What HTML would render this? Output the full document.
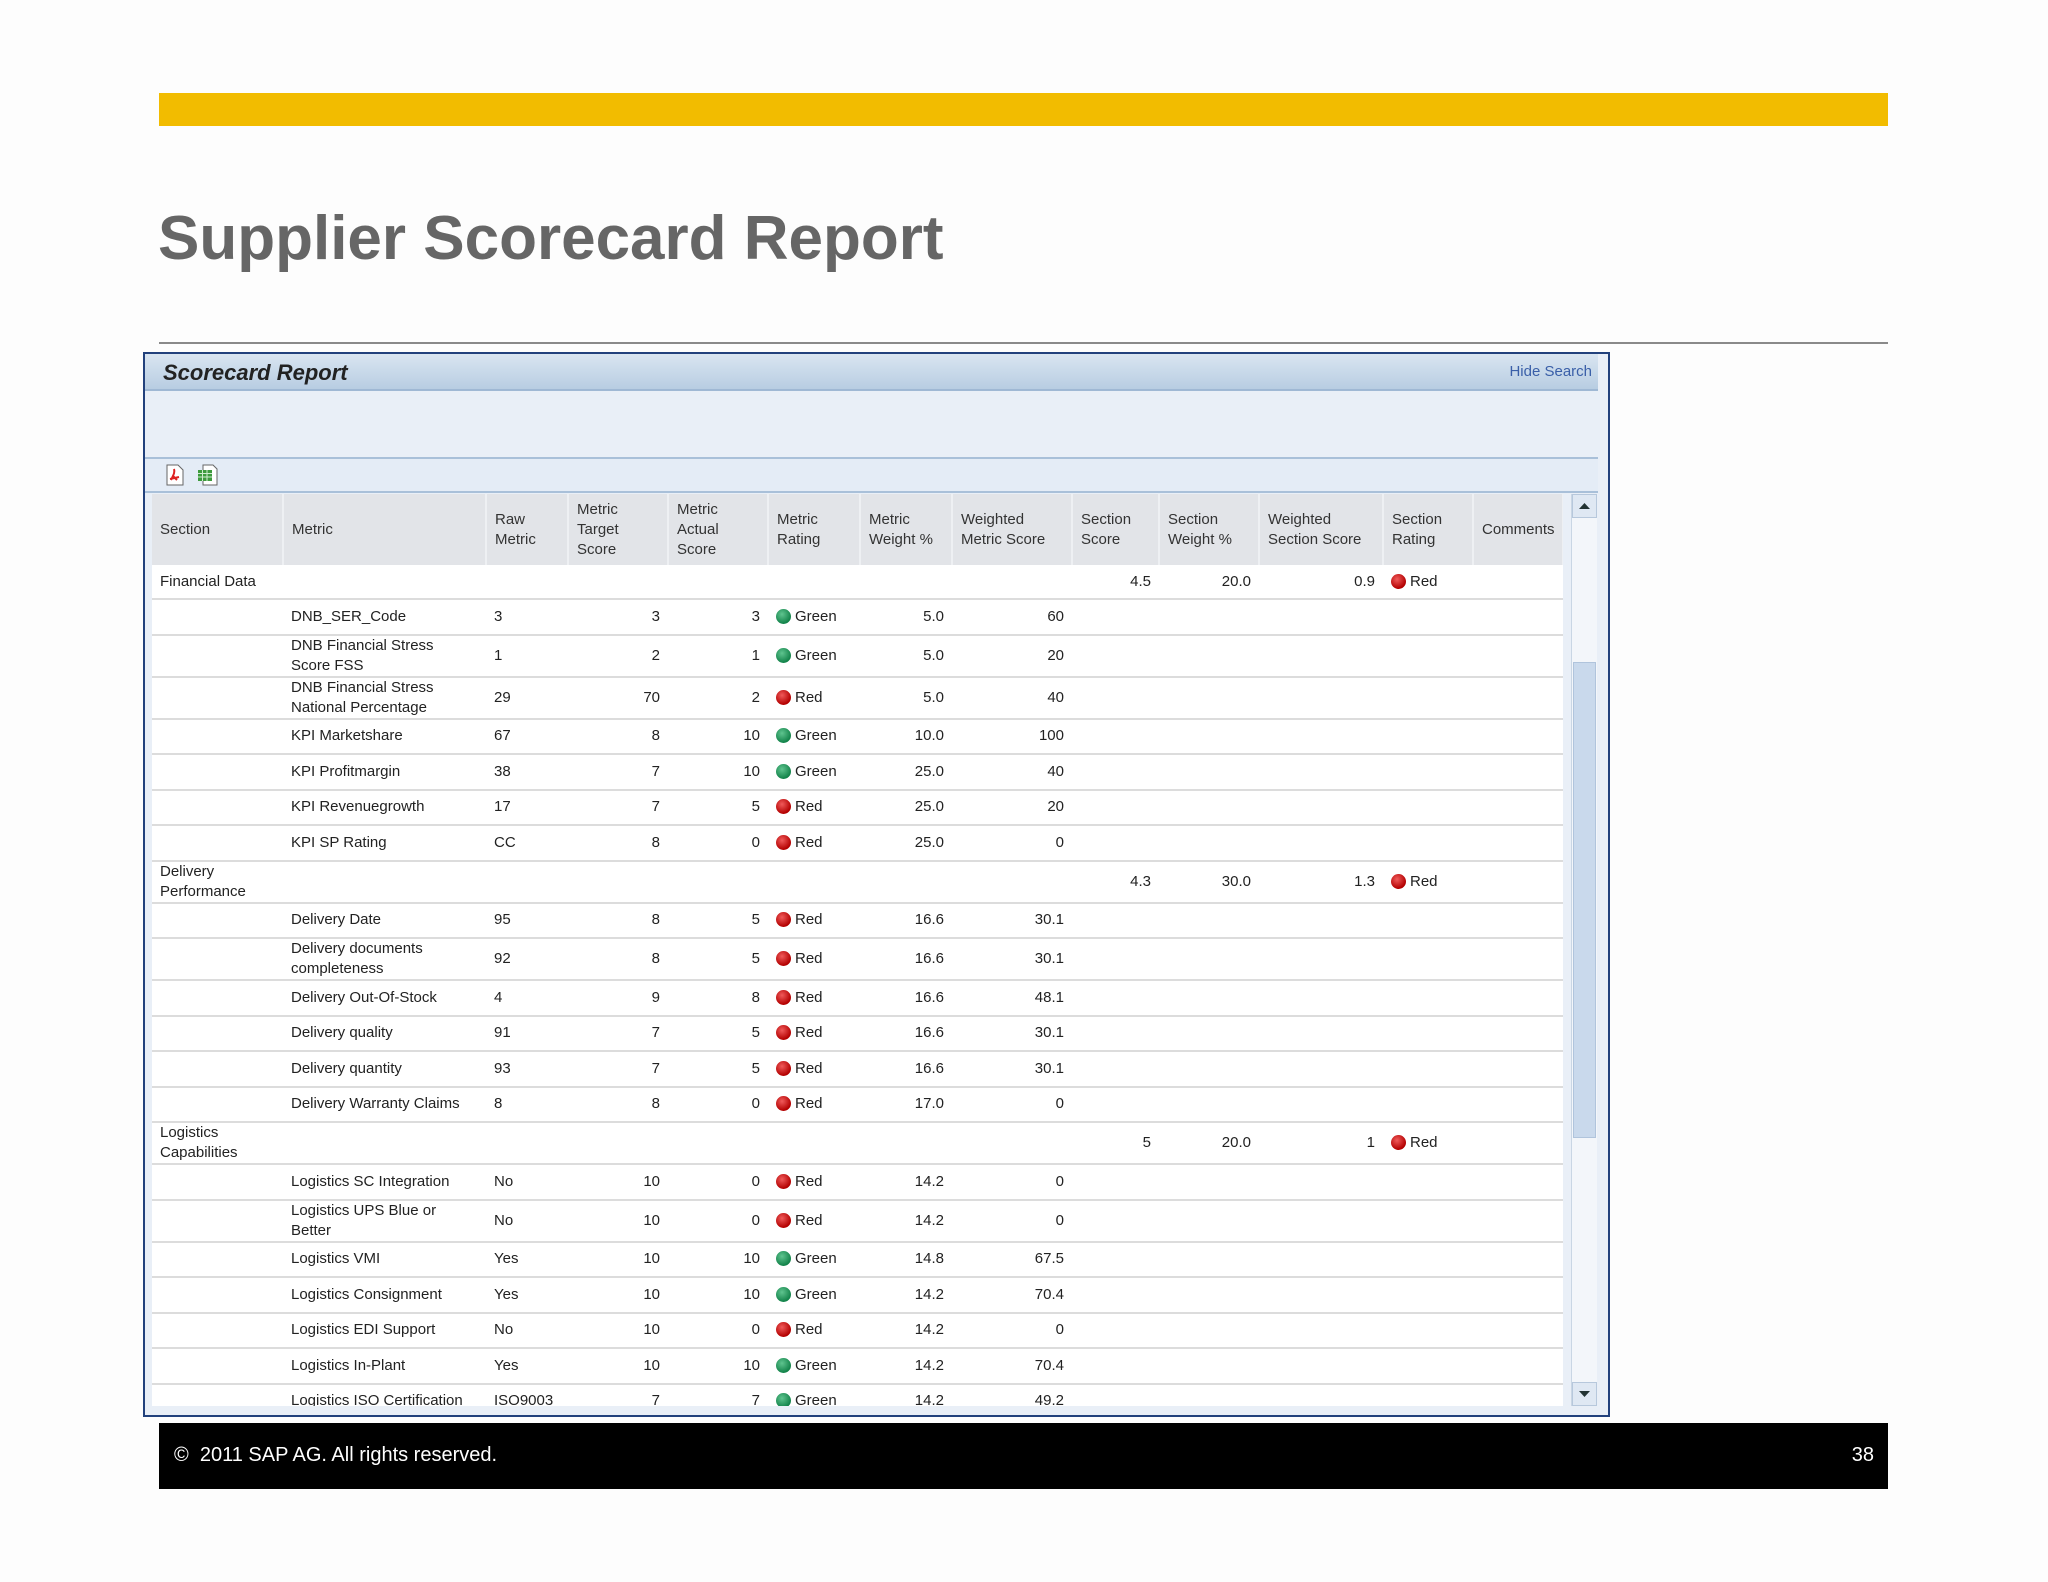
<!DOCTYPE html>
<html><head><meta charset="utf-8">
<style>
*{margin:0;padding:0;box-sizing:border-box}
body{width:2048px;height:1582px;background:#fdfdfd;position:relative;font-family:"Liberation Sans",Arial,sans-serif;overflow:hidden}
.yb{position:absolute;left:159px;top:93px;width:1729px;height:33px;background:#f2bc00}
.title{position:absolute;left:158px;top:203px;font-size:62px;font-weight:bold;color:#666;white-space:nowrap}
.rule{position:absolute;left:159px;top:342px;width:1729px;height:2px;background:#8a8a8a}
.box{position:absolute;left:143px;top:352px;width:1467px;height:1065px;border:2px solid #22417c;background:#e9eff7;overflow:hidden}
.hb{position:absolute;left:0;top:0;width:1453px;height:37px;background:linear-gradient(#d9e5f1,#b8cde2);border-bottom:2px solid #9fb8d4}
.hb .t{position:absolute;left:18px;top:6px;font-size:22px;font-weight:bold;font-style:italic;color:#222}
.hb .h{position:absolute;right:6px;top:9px;font-size:15px;color:#3a5fa8}
.tb{position:absolute;left:0;top:103px;width:1453px;height:36px;background:#e4ecf6;border-top:2px solid #a9c0d9;border-bottom:2px solid #a9c0d9}
.tbl{position:absolute;left:7px;top:140px;width:1411px;height:912px;overflow:hidden;background:#fff}
table{border-collapse:collapse;table-layout:fixed;width:1411px;font-size:15px;color:#222}
th{background:#e2e4e8;font-weight:normal;text-align:left;vertical-align:middle;padding:0 8px;height:71px;border-right:2px solid #eef0f3;color:#333;line-height:20px}
td{padding:0 8px;border-bottom:2px solid #dcdcdc;line-height:20px;white-space:nowrap}
td.r{text-align:right}
tr.s td{height:35.5px}
tr.d td{height:40px}
tr.f td{height:34px}
.dot{display:inline-block;width:15px;height:15px;border-radius:50%;vertical-align:-3px;margin-right:4px}
.g{background:radial-gradient(circle at 40% 35%,#5fc48f,#13834a 70%)}
.rd{background:radial-gradient(circle at 40% 35%,#f05a5a,#b30000 70%)}
.sb{position:absolute;left:1426px;top:140px;width:26px;height:912px;background:#f3f6fa;border-left:1px solid #c9d6e4}
.sb .u,.sb .dn{position:absolute;left:0;width:25px;height:24px;background:#dfe8f3;border:1px solid #b7c8dc}
.sb .u{top:0}.sb .dn{bottom:0}
.sb .th{position:absolute;left:1px;top:168px;width:23px;height:476px;background:#c9d9ec;border:1px solid #b0c4dc}
.foot{position:absolute;left:159px;top:1423px;width:1729px;height:66px;background:#000;color:#fff;font-size:20px}
.foot .l{position:absolute;left:15px;top:21px}
.foot .n{position:absolute;right:14px;top:21px}
</style></head><body>
<div class="yb"></div>
<div class="title">Supplier Scorecard Report</div>
<div class="rule"></div>
<div class="box">
 <div class="hb"><span class="t">Scorecard Report</span><span class="h">Hide Search</span></div>
 <div class="tb">
  <svg style="position:absolute;left:20px;top:5px" width="20" height="22" viewBox="0 0 20 22"><path d="M2 1h11l5 5v15H2z" fill="#fff" stroke="#666"/><path d="M6 16c3-6 4-8 3-11M5 15l9-2M8 12l4 4" stroke="#d22" stroke-width="2" fill="none"/></svg>
  <svg style="position:absolute;left:52px;top:5px" width="22" height="22" viewBox="0 0 22 22"><path d="M6 1h10l4 4v16H6z" fill="#fff" stroke="#666"/><rect x="1" y="6" width="14" height="11" fill="#3c9a3c"/><path d="M1 9.5h14M1 13h14M5.5 6v11M10 6v11" stroke="#cfeccf" stroke-width="1"/></svg>
 </div>
 <div class="tbl"><table>
 <colgroup><col style="width:131px"><col style="width:203px"><col style="width:82px"><col style="width:100px"><col style="width:100px"><col style="width:92px"><col style="width:92px"><col style="width:120px"><col style="width:87px"><col style="width:100px"><col style="width:124px"><col style="width:90px"><col style="width:90px"></colgroup>
 <tr><th>Section</th><th>Metric</th><th>Raw<br>Metric</th><th>Metric<br>Target<br>Score</th><th>Metric<br>Actual<br>Score</th><th>Metric<br>Rating</th><th>Metric<br>Weight %</th><th>Weighted<br>Metric Score</th><th>Section<br>Score</th><th>Section<br>Weight %</th><th>Weighted<br>Section Score</th><th>Section<br>Rating</th><th>Comments</th></tr>
 <tr class="f"><td>Financial Data</td><td></td><td></td><td></td><td></td><td></td><td></td><td></td><td class="r">4.5</td><td class="r">20.0</td><td class="r">0.9</td><td><span class="dot rd"></span>Red</td><td></td></tr>
 <tr class="s"><td></td><td>DNB_SER_Code</td><td>3</td><td class="r">3</td><td class="r">3</td><td><span class="dot g"></span>Green</td><td class="r">5.0</td><td class="r">60</td><td></td><td></td><td></td><td></td><td></td></tr>
 <tr class="d"><td></td><td>DNB Financial Stress<br>Score FSS</td><td>1</td><td class="r">2</td><td class="r">1</td><td><span class="dot g"></span>Green</td><td class="r">5.0</td><td class="r">20</td><td></td><td></td><td></td><td></td><td></td></tr>
 <tr class="d"><td></td><td>DNB Financial Stress<br>National Percentage</td><td>29</td><td class="r">70</td><td class="r">2</td><td><span class="dot rd"></span>Red</td><td class="r">5.0</td><td class="r">40</td><td></td><td></td><td></td><td></td><td></td></tr>
 <tr class="s"><td></td><td>KPI Marketshare</td><td>67</td><td class="r">8</td><td class="r">10</td><td><span class="dot g"></span>Green</td><td class="r">10.0</td><td class="r">100</td><td></td><td></td><td></td><td></td><td></td></tr>
 <tr class="s"><td></td><td>KPI Profitmargin</td><td>38</td><td class="r">7</td><td class="r">10</td><td><span class="dot g"></span>Green</td><td class="r">25.0</td><td class="r">40</td><td></td><td></td><td></td><td></td><td></td></tr>
 <tr class="s"><td></td><td>KPI Revenuegrowth</td><td>17</td><td class="r">7</td><td class="r">5</td><td><span class="dot rd"></span>Red</td><td class="r">25.0</td><td class="r">20</td><td></td><td></td><td></td><td></td><td></td></tr>
 <tr class="s"><td></td><td>KPI SP Rating</td><td>CC</td><td class="r">8</td><td class="r">0</td><td><span class="dot rd"></span>Red</td><td class="r">25.0</td><td class="r">0</td><td></td><td></td><td></td><td></td><td></td></tr>
 <tr class="d"><td>Delivery<br>Performance</td><td></td><td></td><td></td><td></td><td></td><td></td><td></td><td class="r">4.3</td><td class="r">30.0</td><td class="r">1.3</td><td><span class="dot rd"></span>Red</td><td></td></tr>
 <tr class="s"><td></td><td>Delivery Date</td><td>95</td><td class="r">8</td><td class="r">5</td><td><span class="dot rd"></span>Red</td><td class="r">16.6</td><td class="r">30.1</td><td></td><td></td><td></td><td></td><td></td></tr>
 <tr class="d"><td></td><td>Delivery documents<br>completeness</td><td>92</td><td class="r">8</td><td class="r">5</td><td><span class="dot rd"></span>Red</td><td class="r">16.6</td><td class="r">30.1</td><td></td><td></td><td></td><td></td><td></td></tr>
 <tr class="s"><td></td><td>Delivery Out-Of-Stock</td><td>4</td><td class="r">9</td><td class="r">8</td><td><span class="dot rd"></span>Red</td><td class="r">16.6</td><td class="r">48.1</td><td></td><td></td><td></td><td></td><td></td></tr>
 <tr class="s"><td></td><td>Delivery quality</td><td>91</td><td class="r">7</td><td class="r">5</td><td><span class="dot rd"></span>Red</td><td class="r">16.6</td><td class="r">30.1</td><td></td><td></td><td></td><td></td><td></td></tr>
 <tr class="s"><td></td><td>Delivery quantity</td><td>93</td><td class="r">7</td><td class="r">5</td><td><span class="dot rd"></span>Red</td><td class="r">16.6</td><td class="r">30.1</td><td></td><td></td><td></td><td></td><td></td></tr>
 <tr class="s"><td></td><td>Delivery Warranty Claims</td><td>8</td><td class="r">8</td><td class="r">0</td><td><span class="dot rd"></span>Red</td><td class="r">17.0</td><td class="r">0</td><td></td><td></td><td></td><td></td><td></td></tr>
 <tr class="d"><td>Logistics<br>Capabilities</td><td></td><td></td><td></td><td></td><td></td><td></td><td></td><td class="r">5</td><td class="r">20.0</td><td class="r">1</td><td><span class="dot rd"></span>Red</td><td></td></tr>
 <tr class="s"><td></td><td>Logistics SC Integration</td><td>No</td><td class="r">10</td><td class="r">0</td><td><span class="dot rd"></span>Red</td><td class="r">14.2</td><td class="r">0</td><td></td><td></td><td></td><td></td><td></td></tr>
 <tr class="d"><td></td><td>Logistics UPS Blue or<br>Better</td><td>No</td><td class="r">10</td><td class="r">0</td><td><span class="dot rd"></span>Red</td><td class="r">14.2</td><td class="r">0</td><td></td><td></td><td></td><td></td><td></td></tr>
 <tr class="s"><td></td><td>Logistics VMI</td><td>Yes</td><td class="r">10</td><td class="r">10</td><td><span class="dot g"></span>Green</td><td class="r">14.8</td><td class="r">67.5</td><td></td><td></td><td></td><td></td><td></td></tr>
 <tr class="s"><td></td><td>Logistics Consignment</td><td>Yes</td><td class="r">10</td><td class="r">10</td><td><span class="dot g"></span>Green</td><td class="r">14.2</td><td class="r">70.4</td><td></td><td></td><td></td><td></td><td></td></tr>
 <tr class="s"><td></td><td>Logistics EDI Support</td><td>No</td><td class="r">10</td><td class="r">0</td><td><span class="dot rd"></span>Red</td><td class="r">14.2</td><td class="r">0</td><td></td><td></td><td></td><td></td><td></td></tr>
 <tr class="s"><td></td><td>Logistics In-Plant</td><td>Yes</td><td class="r">10</td><td class="r">10</td><td><span class="dot g"></span>Green</td><td class="r">14.2</td><td class="r">70.4</td><td></td><td></td><td></td><td></td><td></td></tr>
 <tr class="s"><td></td><td>Logistics ISO Certification</td><td>ISO9003</td><td class="r">7</td><td class="r">7</td><td><span class="dot g"></span>Green</td><td class="r">14.2</td><td class="r">49.2</td><td></td><td></td><td></td><td></td><td></td></tr>
 </table></div>
 <div class="sb"><div class="u"><svg width="23" height="22"><path d="M6 14l5.5-6 5.5 6z" fill="#233"/></svg></div><div class="th"></div><div class="dn"><svg width="23" height="22"><path d="M6 8l5.5 6 5.5-6z" fill="#233"/></svg></div></div>
</div>
<div class="foot"><span class="l">©&nbsp; 2011 SAP AG. All rights reserved.</span><span class="n">38</span></div>
</body></html>
